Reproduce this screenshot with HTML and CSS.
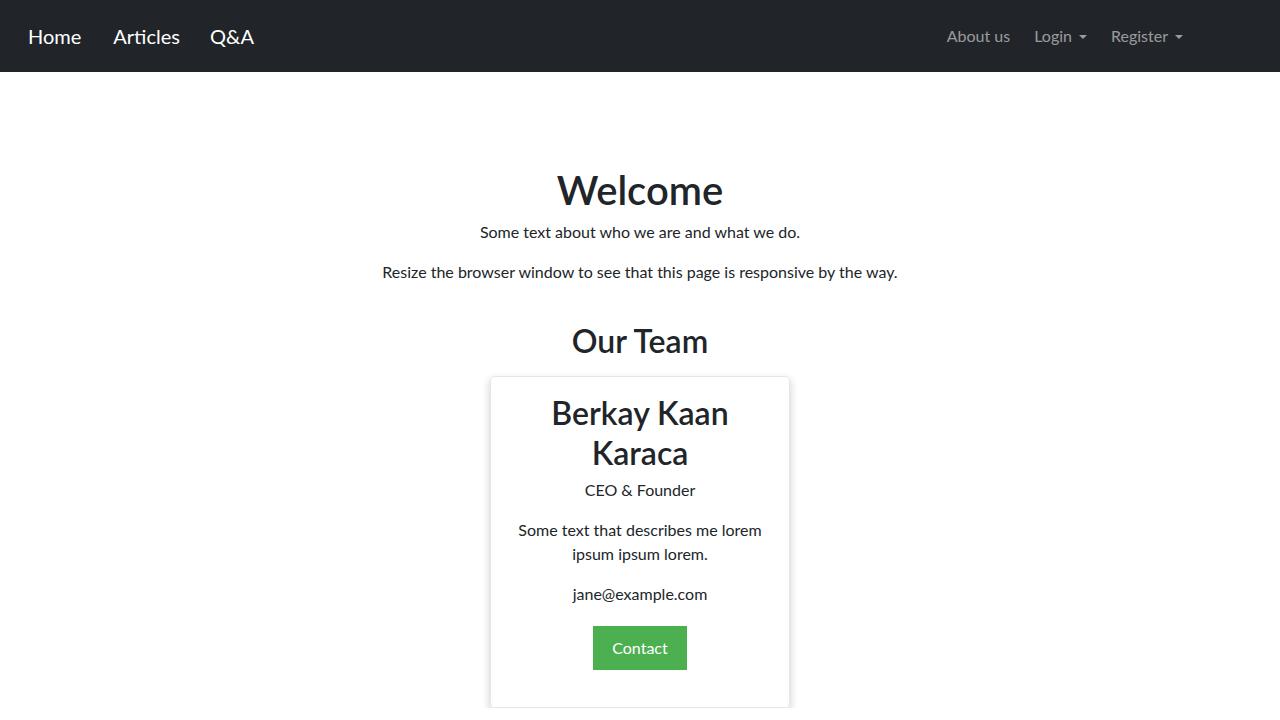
FILE: index.html
```html
<!DOCTYPE html>
<html lang="en">
<head>
<meta charset="utf-8">
<title>Home</title>
<link rel="stylesheet" href="styles.css">
</head>
<body>
<nav class="navbar">
  <ul class="nav-left">
    <li><a href="#" class="nav-main">Home</a></li>
    <li><a href="#" class="nav-main">Articles</a></li>
    <li><a href="#" class="nav-main">Q&amp;A</a></li>
  </ul>
  <ul class="nav-right">
    <li><a href="#" class="nav-sub">About us</a></li>
    <li><a href="#" class="nav-sub dropdown">Login</a></li>
    <li><a href="#" class="nav-sub dropdown">Register</a></li>
  </ul>
</nav>
<main class="content">
  <h1 class="title">Welcome</h1>
  <p class="text">Some text about who we are and what we do.</p>
  <p class="text">Resize the browser window to see that this page is responsive by the way.</p>
  <h2 class="section-title">Our Team</h2>
  <div class="card">
    <h2 class="name">Berkay Kaan Karaca</h2>
    <p class="role">CEO &amp; Founder</p>
    <p class="text">Some text that describes me lorem ipsum ipsum lorem.</p>
    <p class="text">jane@example.com</p>
    <div class="btn-row"><button class="button">Contact</button></div>
  </div>
</main>
</body>
</html>
```
FILE: styles.css
```css
* { box-sizing: border-box; }
body {
  margin: 0;
  font-family: "Lato", "Noto Sans", sans-serif;
  font-size: 16px;
  line-height: 1.5;
  color: #212529;
  background: #fff;
}
.navbar {
  height: 72px;
  background: #212529;
  display: flex;
  align-items: center;
  justify-content: space-between;
  padding: 0 89px 0 12px;
}
.navbar ul {
  list-style: none;
  margin: 0;
  padding: 0;
  display: flex;
  align-items: center;
}
.navbar a { text-decoration: none; display: block; }
.nav-main {
  color: #fff;
  font-size: 20px;
  padding: 0 16px;
}
.nav-left li:nth-child(2) .nav-main { padding: 0 15px 0 16px; }
.nav-left li:nth-child(3) .nav-main { padding-left: 15px; }
.nav-right { gap: 8px; }
.nav-sub {
  color: rgba(255,255,255,.55);
  font-size: 16px;
  padding: 0 8px;
}
.dropdown::after {
  content: "";
  display: inline-block;
  margin-left: 7px;
  vertical-align: 3px;
  border-top: 4px solid;
  border-left: 4px solid transparent;
  border-right: 4px solid transparent;
}
.content {
  padding-top: 94px;
  text-align: center;
  display: flex;
  flex-direction: column;
  align-items: center;
}
.title {
  font-size: 40px;
  font-weight: 600;
  line-height: 48px;
  margin: 0 0 6px;
}
.text { margin: 0 0 16px; }
.section-title {
  font-size: 32px;
  font-weight: 600;
  line-height: 38px;
  margin: 22px 0 16px;
}
.card {
  width: 300px;
  border: 1px solid #e6e6e6;
  border-radius: 4px;
  box-shadow: 0 4px 8px 0 rgba(0,0,0,.2);
  padding: 16px 16px 37px;
}
.name {
  font-size: 32px;
  font-weight: 600;
  line-height: 40px;
  margin: 0 0 5px;
}
.role { margin: 0 0 16px; }
.btn-row { margin-top: 20px; line-height: 0; }
.button {
  font-family: inherit;
  font-size: 16px;
  line-height: 24px;
  color: #fff;
  background: #4caf50;
  border: 0;
  padding: 10px 19px;
  cursor: pointer;
}
```
